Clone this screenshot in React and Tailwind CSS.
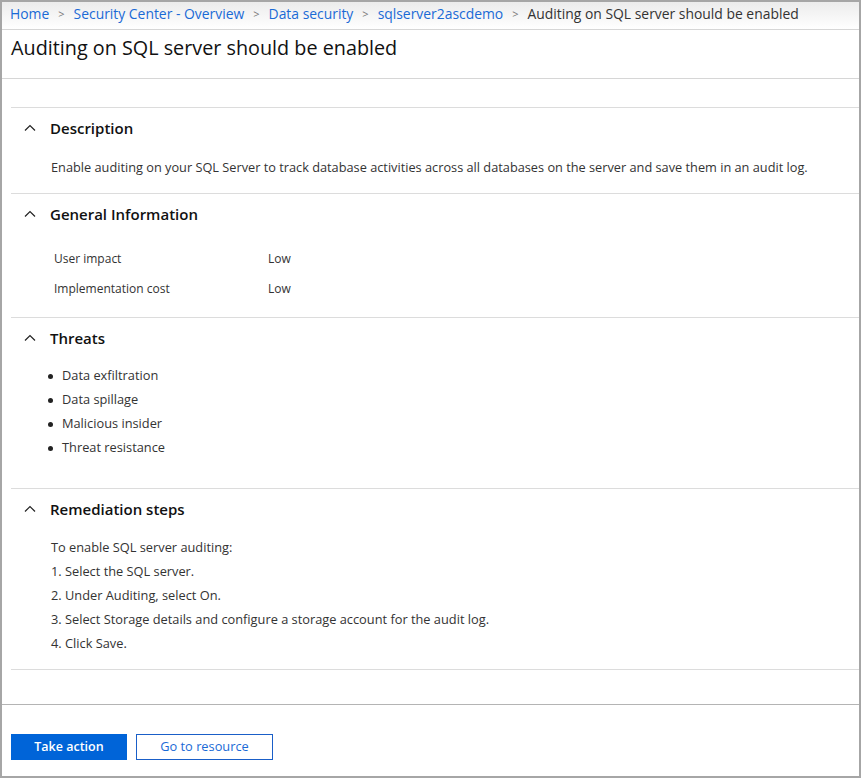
import React from "react";

const Chevron = () => (
  <svg width="12" height="8" viewBox="0 0 12 8" className="shrink-0">
    <path d="M1 6.5 L6 1.5 L11 6.5" fill="none" stroke="#222" strokeWidth="1.2" />
  </svg>
);

const Section = ({ title, children, className = "" }) => (
  <div className={`border-b border-[#dcdcdc] ${className}`}>
    <div className="flex items-center h-[40px] pl-[13px] gap-[14px]">
      <Chevron />
      <span className="text-[15px] font-semibold text-[#111]">{title}</span>
    </div>
    {children}
  </div>
);

const crumbs = ["Home", "Security Center - Overview", "Data security", "sqlserver2ascdemo"];

export default function App() {
  return (
    <div
      className="w-[861px] h-[778px] border-2 border-[#a6a6a6] bg-white flex flex-col text-[#333]"
      style={{ fontFamily: '"Open Sans", "Noto Sans", sans-serif' }}
    >
      <div className="h-[28px] shrink-0 flex items-center pl-[8px] pb-[3px] bg-gradient-to-b from-[#ececec] to-white border-b border-[#d6d6d6] text-[13.9px]">
        {crumbs.map((c) => (
          <React.Fragment key={c}>
            <a className="text-[#1a6ad6]">{c}</a>
            <span className="text-[#777] text-[11px] mx-[9px]">&gt;</span>
          </React.Fragment>
        ))}
        <span className="text-[#333]">Auditing on SQL server should be enabled</span>
      </div>

      <div className="h-[49px] shrink-0 flex items-start pt-[3px] pl-[9px] border-b border-[#d6d6d6]">
        <h1 className="text-[19.8px] text-[#111]">Auditing on SQL server should be enabled</h1>
      </div>

      <div className="flex-1 pl-[9px] pt-[28px]">
        <div className="border-t border-[#dcdcdc]">
          <Section title="Description" className="h-[86px]">
            <p className="pl-[40px] pt-[10px] text-[12.75px] text-[#333]">
              Enable auditing on your SQL Server to track database activities across all databases on the server and save them in an audit log.
            </p>
          </Section>
          <Section title="General Information" className="h-[124px]">
            <div className="pl-[43px] pt-[10px] text-[12px] text-[#333]">
              <div className="flex h-[30px] items-center">
                <span className="w-[214px]">User impact</span>
                <span>Low</span>
              </div>
              <div className="flex h-[30px] items-center">
                <span className="w-[214px]">Implementation cost</span>
                <span>Low</span>
              </div>
            </div>
          </Section>
          <Section title="Threats" className="h-[171px]">
            <ul className="pl-[37px] pt-[6px] text-[12.8px] text-[#333]">
              {["Data exfiltration", "Data spillage", "Malicious insider", "Threat resistance"].map((t) => (
                <li key={t} className="flex items-center h-[24px]">
                  <span className="w-[5px] h-[5px] rounded-full bg-[#222] mr-[9px]"></span>
                  {t}
                </li>
              ))}
            </ul>
          </Section>
          <Section title="Remediation steps" className="h-[181px]">
            <div className="pl-[40px] pt-[7px] text-[12.8px] text-[#333]">
              {[
                "To enable SQL server auditing:",
                "1. Select the SQL server.",
                "2. Under Auditing, select On.",
                "3. Select Storage details and configure a storage account for the audit log.",
                "4. Click Save.",
              ].map((s) => (
                <div key={s} className="h-[24px] flex items-center">{s}</div>
              ))}
            </div>
          </Section>
        </div>
      </div>

      <div className="h-[72px] shrink-0 border-t border-[#b4b4b4] flex items-start pt-[29px] pl-[9px] gap-[9px]">
        <button className="w-[116px] h-[26px] bg-[#0064d8] text-white text-[12.5px] font-semibold">Take action</button>
        <button className="w-[137px] h-[26px] border border-[#1a5fc8] text-[#1a6ad6] text-[12.8px] bg-white">Go to resource</button>
      </div>
    </div>
  );
}
